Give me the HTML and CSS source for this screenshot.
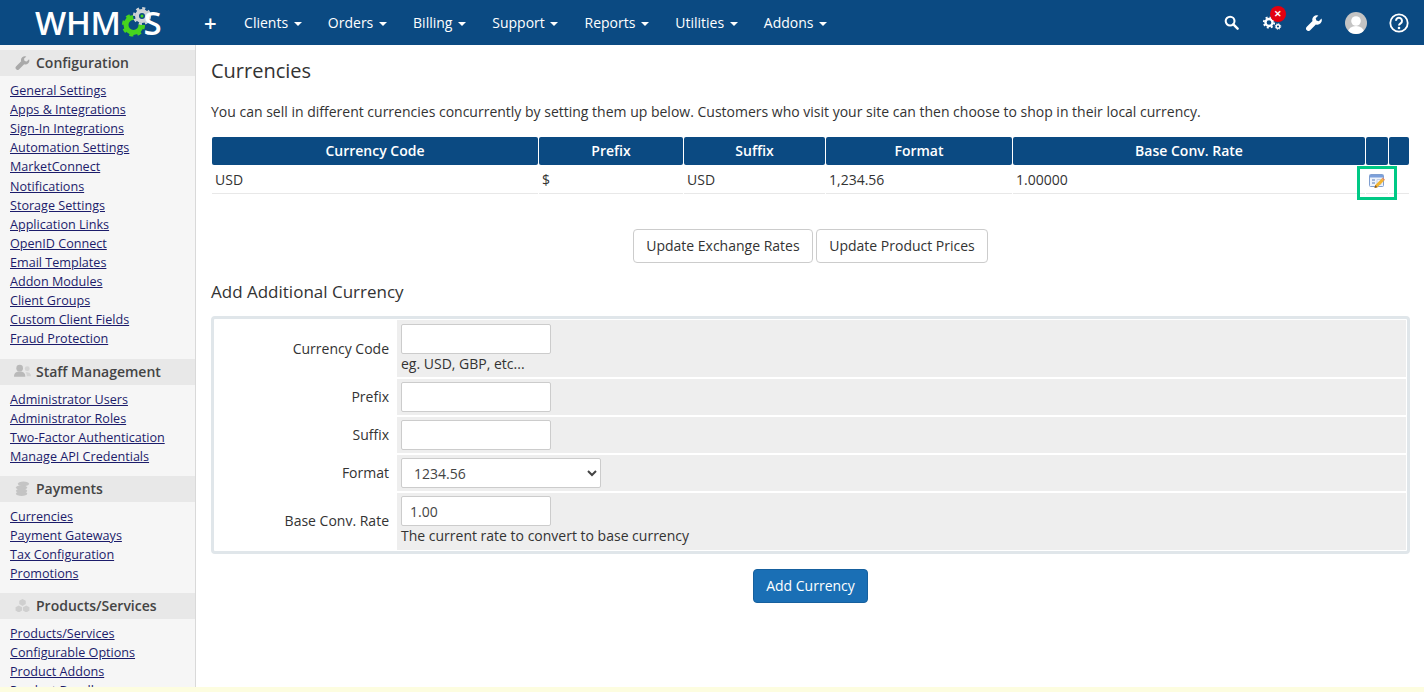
FILE: index.html
```html
<!DOCTYPE html>
<html lang="en">
<head>
<meta charset="utf-8">
<title>Currencies - WHMCS</title>
<link rel="stylesheet" href="styles.css">
</head>
<body>
<header class="topbar">
  <a class="logo"><span>WHM</span><svg class="logo-gear" viewBox="0 0 42 36" width="42" height="36"><g fill="none"><circle cx="12.500" cy="20" r="10" stroke="#47d41e" stroke-width="3.200" stroke-dasharray="3.930 3.930"/><circle cx="12.500" cy="20" r="7.500" stroke="#47d41e" stroke-width="5"/><circle cx="21" cy="11" r="9" fill="#0b4a82"/><circle cx="21" cy="11" r="7.800" stroke="#cfd3d6" stroke-width="2.600" stroke-dasharray="3.060 3.060"/><circle cx="21" cy="11" r="5" stroke="#cfd3d6" stroke-width="4"/></g><circle cx="21" cy="11" r="1.500" fill="#47d41e"/></svg><span class="logo-s">S</span></a>
  <nav class="mainnav">
    <a class="plus">+</a>
    <a>Clients <i class="caret"></i></a>
    <a>Orders <i class="caret"></i></a>
    <a>Billing <i class="caret"></i></a>
    <a>Support <i class="caret"></i></a>
    <a>Reports <i class="caret"></i></a>
    <a>Utilities <i class="caret"></i></a>
    <a>Addons <i class="caret"></i></a>
  </nav>
  <div class="tools">
    <svg class="tool-search" viewBox="0 0 16 16" width="15" height="15"><circle cx="6.500" cy="6.500" r="4.700" fill="none" stroke="#fff" stroke-width="2.200"/><path d="M10 10l4.500 4.500" stroke="#fff" stroke-width="2.600" stroke-linecap="round"/></svg>
    <span class="tool-gears">
      <svg viewBox="0 0 20 14" width="20" height="14"><g fill="none" stroke="#fff"><circle cx="7" cy="6.500" r="5.200" stroke-width="1.800" stroke-dasharray="2.040 2.040"/><circle cx="7" cy="6.500" r="3.500" stroke-width="2.400"/><circle cx="16" cy="10.500" r="2.800" stroke-width="1" stroke-dasharray="1.100 1.100"/><circle cx="16" cy="10.500" r="1.800" stroke-width="1.400"/></g></svg>
      <b class="badge">✕</b>
    </span>
    <svg class="tool-wrench" viewBox="0 0 16 16" width="16" height="16"><path fill="#fff" d="M15.500 3.600l-2.700 2.700-2.400-.7-.7-2.400L12.400.5a4.500 4.500 0 0 0-5.900 5.600L.8 11.800a2.400 2.400 0 0 0 3.400 3.400l5.700-5.700a4.500 4.500 0 0 0 5.600-5.900z"/></svg>
    <svg class="tool-avatar" viewBox="0 0 22 22" width="22" height="22"><defs><clipPath id="av"><circle cx="11" cy="11" r="11"/></clipPath></defs><circle cx="11" cy="11" r="11" fill="#c4c4c4"/><g clip-path="url(#av)" fill="#fff"><circle cx="11" cy="9" r="4.800"/><ellipse cx="11" cy="20" rx="8" ry="6"/></g></svg>
    <svg class="tool-help" viewBox="0 0 20 20" width="20" height="20"><circle cx="10" cy="10" r="8.700" fill="none" stroke="#fff" stroke-width="1.800"/><path d="M7 7.800a3 3 0 1 1 4.600 2.500c-1 .7-1.600 1.100-1.600 2.200" fill="none" stroke="#fff" stroke-width="2"/><circle cx="10" cy="15" r="1.300" fill="#fff"/></svg>
  </div>
</header>
<div class="layout">
  <aside class="sidebar">
    <h3 class="side-head"><svg viewBox="0 0 16 16" width="14" height="14"><path fill="#a9a9a9" d="M15.500 3.600l-2.700 2.700-2.400-.7-.7-2.400L12.400.5a4.500 4.500 0 0 0-5.900 5.600L.8 11.800a2.400 2.400 0 0 0 3.400 3.400l5.700-5.700a4.500 4.500 0 0 0 5.600-5.900z"/></svg>Configuration</h3>
    <ul class="side-list">
      <li><a>General Settings</a></li>
      <li><a>Apps &amp; Integrations</a></li>
      <li><a>Sign-In Integrations</a></li>
      <li><a>Automation Settings</a></li>
      <li><a>MarketConnect</a></li>
      <li><a>Notifications</a></li>
      <li><a>Storage Settings</a></li>
      <li><a>Application Links</a></li>
      <li><a>OpenID Connect</a></li>
      <li><a>Email Templates</a></li>
      <li><a>Addon Modules</a></li>
      <li><a>Client Groups</a></li>
      <li><a>Custom Client Fields</a></li>
      <li><a>Fraud Protection</a></li>
    </ul>
    <h3 class="side-head"><svg viewBox="0 0 18 14" width="17" height="14"><g fill="#b9b9b9"><circle cx="6" cy="4" r="3.500"/><path d="M0 13c0-4 2-5.500 6-5.500s6 1.500 6 5.500z"/></g><g fill="#d4d4d4"><circle cx="14" cy="4.500" r="2.600"/><path d="M13 8.200c3 0 5 1 5 4.300h-4.500c0-2-.2-3-1.500-4.200z"/></g></svg>Staff Management</h3>
    <ul class="side-list">
      <li><a>Administrator Users</a></li>
      <li><a>Administrator Roles</a></li>
      <li><a>Two-Factor Authentication</a></li>
      <li><a>Manage API Credentials</a></li>
    </ul>
    <h3 class="side-head"><svg viewBox="0 0 16 16" width="14" height="15"><g fill="#c4c4c4"><ellipse cx="9" cy="3" rx="6" ry="2.500"/><ellipse cx="7" cy="7" rx="6" ry="2.500"/><ellipse cx="7" cy="10.500" rx="6" ry="2.500"/><ellipse cx="7" cy="13.500" rx="6" ry="2.500"/></g></svg>Payments</h3>
    <ul class="side-list">
      <li><a>Currencies</a></li>
      <li><a>Payment Gateways</a></li>
      <li><a>Tax Configuration</a></li>
      <li><a>Promotions</a></li>
    </ul>
    <h3 class="side-head"><svg viewBox="0 0 16 14" width="14" height="13"><g fill="#cfcfcf"><path d="M8 0l3.500 2v3.500L8 7.500 4.500 5.500V2z"/><path d="M4 7l3.500 2v3.500L4 14.500 .5 12.500V9z"/><path d="M12 7l3.500 2v3.500L12 14.500 8.500 12.500V9z"/></g></svg>Products/Services</h3>
    <ul class="side-list">
      <li><a>Products/Services</a></li>
      <li><a>Configurable Options</a></li>
      <li><a>Product Addons</a></li>
      <li><a>Product Bundles</a></li>
    </ul>
  </aside>
  <main class="content">
    <h1 class="page-title">Currencies</h1>
    <p class="intro">You can sell in different currencies concurrently by setting them up below. Customers who visit your site can then choose to shop in their local currency.</p>
    <div class="table-wrap">
      <table class="datatable">
        <thead>
          <tr><th class="c1">Currency Code</th><th class="c2">Prefix</th><th class="c3">Suffix</th><th class="c4">Format</th><th class="c5">Base Conv. Rate</th><th class="c6"></th><th class="c7"></th></tr>
        </thead>
        <tbody>
          <tr><td>USD</td><td>$</td><td>USD</td><td>1,234.56</td><td>1.00000</td><td class="icon-cell"><svg viewBox="0 0 16 16" width="16" height="16"><rect x=".5" y="1.500" width="14" height="12" rx="1" fill="#eef3fb" stroke="#7f9fd0"/><rect x="1" y="2" width="13" height="2.500" fill="#7b9fdb"/><path d="M3 7h3M3 10h3" stroke="#5a7db5"/><path d="M8 6.500h4v5H8z" fill="none" stroke="#c4d0e4"/><path d="M5.500 15l.8-3 6.500-6.500 2.300 2.300L8.500 14.300z" fill="#f2b430"/><path d="M5.500 15l.8-3 2.200 2.300z" fill="#8a5a20"/><path d="M12.800 5.500l1-1 2.200 2.300-1 1z" fill="#e88a60"/></svg></td><td></td></tr>
        </tbody>
      </table>
      <span class="highlight"></span>
    </div>
    <div class="btn-row">
      <button class="btn">Update Exchange Rates</button>
      <button class="btn">Update Product Prices</button>
    </div>
    <h2 class="sub-title">Add Additional Currency</h2>
    <div class="form-box">
      <table class="form-table">
        <tr class="row-first"><td class="lbl">Currency Code</td><td class="fld"><input class="input" type="text"><div class="hint">eg. USD, GBP, etc...</div></td></tr>
        <tr><td class="lbl">Prefix</td><td class="fld"><input class="input" type="text"></td></tr>
        <tr><td class="lbl">Suffix</td><td class="fld"><input class="input" type="text"></td></tr>
        <tr><td class="lbl">Format</td><td class="fld"><select class="input select"><option>1234.56</option></select></td></tr>
        <tr class="row-last"><td class="lbl">Base Conv. Rate</td><td class="fld"><input class="input" type="text" value="1.00"><div class="hint">The current rate to convert to base currency</div></td></tr>
      </table>
    </div>
    <div class="submit-row"><button class="btn btn-primary">Add Currency</button></div>
  </main>
</div>
<div class="bottom-strip"></div>
</body>
</html>
```
FILE: styles.css
```css
* { box-sizing: border-box; }
html, body { margin: 0; height: 692px; overflow: hidden; }
body { font-family: "Open Sans", sans-serif; font-size: 14px; color: #333; background: #fff; position: relative; }

.topbar { height: 45px; background: #0b4a82; display: flex; align-items: center; color: #fff; }
.logo { display: flex; align-items: center; margin-left: 35px; width: 125px; font-family: "Open Sans", sans-serif; font-size: 33px; font-weight: 600; letter-spacing: -0.300px; line-height: 45px; }
.logo-gear { margin-right: -19px; flex: none; }
.logo-s { position: relative; }
.mainnav { display: flex; align-items: center; gap: 26.150px; margin-left: 44px; }
.mainnav a { white-space: nowrap; }
.mainnav .plus { font-size: 22px; font-weight: 600; line-height: 24px; margin: 0 1.350px 2px 0; }
.caret { display: inline-block; width: 0; height: 0; margin-left: 2px; vertical-align: middle; border-top: 4px solid #fff; border-left: 4px solid transparent; border-right: 4px solid transparent; }
.tools { display: flex; align-items: center; margin-left: auto; padding-right: 15px; }
.tool-search { margin-right: 23px; }
.tool-gears { position: relative; display: block; width: 20px; height: 14px; margin-top: 1px; margin-right: 24px; }
.tool-gears svg { display: block; }
.badge { position: absolute; left: 8px; top: -10px; width: 16px; height: 16px; border-radius: 50%; background: #e3000f; color: #fff; font-size: 9px; font-weight: 700; line-height: 16px; text-align: center; }
.tool-wrench { margin-right: 23px; }
.tool-avatar { margin-right: 22px; }

.layout { display: flex; height: 647px; }
.sidebar { width: 196px; flex: none; background: #f6f6f6; border-right: 1px solid #d9d9d9; padding-top: 5px; overflow: hidden; }
.side-head { margin: 0; height: 26px; background: #e8e8e8; display: flex; align-items: center; padding: 0 0 1px 14px; font-size: 14px; font-weight: 600; color: #444; }
.side-head svg { width: 17px; margin-right: 5px; flex: none; }
.side-list { list-style: none; margin: 0 0 9.530px; padding: 5.150px 0 0 10px; }
.side-list:first-of-type { margin-bottom: 10.730px; }
.side-list li { height: 19.080px; font-size: 12.600px; line-height: 19px; white-space: nowrap; }
.side-list a { color: #1c1c6b; text-decoration: underline; }

.content { flex: 1; padding: 0 14px 0 15px; min-width: 0; }
.page-title { margin: 12px 0 0; font-size: 20px; font-weight: 400; line-height: 27px; color: #333; }
.intro { margin: 18px 0 0; font-size: 14px; line-height: 20px; }
.table-wrap { position: relative; margin-top: 15px; }
.datatable { width: 100%; border-collapse: separate; border-spacing: 1px 0; table-layout: fixed; }
.datatable th { background: #0b4a82; color: #fff; height: 28px; padding: 0 0 2px; font-size: 14px; font-weight: 600; text-align: center; border-radius: 2px; }
.c1 { width: 326px; } .c2 { width: 144px; } .c3 { width: 141px; } .c4 { width: 186px; } .c5 { width: 352px; } .c6 { width: 22px; } .c7 { width: 20px; }
.datatable td { height: 29px; padding: 0 3px; border-bottom: 1px solid #e8e8e8; font-size: 14px; }
.datatable .icon-cell { padding: 4px 0 0 3px; }
.icon-cell svg { display: block; }
.highlight { position: absolute; left: 1146px; top: 29px; width: 40px; height: 34px; border: 3px solid #00c985; pointer-events: none; }

.btn-row { display: flex; justify-content: center; gap: 3px; margin-top: 35px; }
.btn { height: 34px; padding: 0 12.300px 2px; border: 1px solid #ccc; border-radius: 4px; background: #fff; color: #333; font-family: "Open Sans", sans-serif; font-size: 14px; white-space: nowrap; }
.sub-title { margin: 17px 0 0; font-size: 17px; font-weight: 400; line-height: 24px; color: #333; }
.form-box { margin-top: 12px; border: 3px solid #e0e6ea; border-radius: 4px; padding: 1px; }
.form-table { width: 100%; border-collapse: separate; border-spacing: 0 2px; margin: -2px 0; table-layout: fixed; }
.lbl { width: 182px; padding: 0 8px 2px 0; text-align: right; background: #fff; }
.fld { background: #eee; padding: 3px 4px; height: 36px; }
.input { display: block; width: 150px; height: 30px; border: 1px solid #ccc; border-radius: 2px; padding: 0 8px; background: #fff; font-family: "Open Sans", sans-serif; font-size: 14px; color: #444; }
.select { width: 200px; }
.hint { font-size: 14px; line-height: 19px; margin: 1px 0; }
.row-first .lbl { padding-bottom: 0; }
.row-first .fld { padding-top: 4px; }
.row-first .hint { margin: 0 0 1px; }
.row-last .hint { margin: 0 0 2px; }
.submit-row { display: flex; justify-content: center; margin-top: 15px; }
.btn-primary { background: #1a6fb5; border-color: #16609e; color: #fff; }
.bottom-strip { position: absolute; left: 0; right: 0; bottom: 0; height: 5px; background: #fdfde0; }
```
